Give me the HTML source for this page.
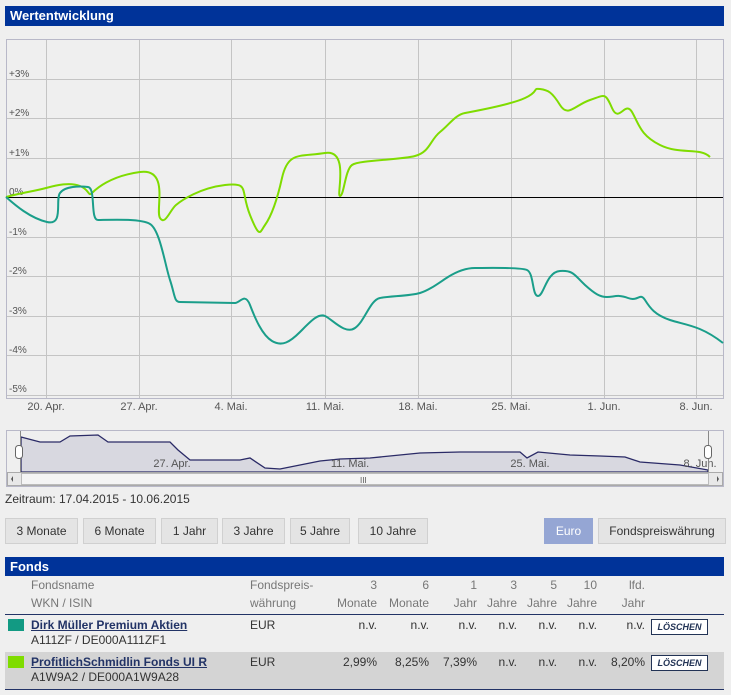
<!DOCTYPE html>
<html><head><meta charset="utf-8"><style>
body{margin:0;width:731px;height:695px;background:#efefef;font-family:"Liberation Sans",sans-serif;position:relative;overflow:hidden;color:#333}
.bar{position:absolute;left:5px;width:719px;background:#003399;color:#fff;font-weight:bold;font-size:13px}
.btn{position:absolute;top:518px;height:24px;border:1px solid #d0d0d0;background:#e4e4e4;font-size:12px;color:#333;line-height:24px;text-align:center}
.t{position:absolute;font-size:12px}
.r{text-align:right}
.g{color:#777}
.del{position:absolute;left:651px;width:55px;height:14px;border:1px solid #223355;background:#fff;font-size:9px;font-weight:bold;font-style:italic;color:#223355;text-align:center;line-height:14px}
</style></head><body>
<div class="bar" style="top:6px;height:20px;line-height:20px;padding-left:5px;width:714px">Wertentwicklung</div>
<svg style="position:absolute;left:0;top:0" width="731" height="695" font-family="Liberation Sans" font-size="10">
<rect x="6.5" y="39.5" width="717" height="359" fill="#efefef" stroke="#b8b8c8"/>
<g stroke="#c4c4c4">
<path d="M46.5 40V398M139.5 40V398M231.5 40V398M325.5 40V398M418.5 40V398M511.5 40V398M604.5 40V398M696.5 40V398"/>
<path d="M7 79.5H723M7 118.5H723M7 158.5H723M7 237.5H723M7 276.5H723M7 316.5H723M7 355.5H723M7 395.5H723"/>
</g>
<path d="M7 197.5H723" stroke="#000"/>
<g fill="#555"><text x="9" y="77">+3%</text><text x="9" y="116">+2%</text><text x="9" y="156">+1%</text><text x="9" y="195">0%</text><text x="9" y="235">-1%</text><text x="9" y="274">-2%</text><text x="9" y="314">-3%</text><text x="9" y="353">-4%</text><text x="9" y="392">-5%</text></g>
<g fill="#555" font-size="11" text-anchor="middle"><text x="46" y="410">20. Apr.</text><text x="139" y="410">27. Apr.</text><text x="231" y="410">4. Mai.</text><text x="325" y="410">11. Mai.</text><text x="418" y="410">18. Mai.</text><text x="511" y="410">25. Mai.</text><text x="604" y="410">1. Jun.</text><text x="696" y="410">8. Jun.</text></g>
<path fill="none" stroke="#7fdc00" stroke-width="2" d="M6 197 C20 193 35 191 46 188 S70 182 80 186 S88 197 92 193 S110 176 140 172 S155 210 160 218 S170 210 176 205 S200 188 225 185 S240 190 250 215 S260 232 265 225 S276 205 282 178 S300 157 325 153 S336 196 340 196 S345 170 352 165 S400 160 415 156 S430 140 440 132 S455 115 465 113 S510 105 525 98 S532 88 540 89 S552 92 560 105 S575 105 590 100 S605 92 612 108 S625 100 632 112 S640 135 660 145 S700 147 710 157"/>
<path fill="none" stroke="#1a9e8a" stroke-width="2" d="M6 197 C15 205 30 218 47 222 S55 200 60 193 S80 186 88 187 S90 220 98 220 S140 218 150 224 S165 265 170 280 S174 302 180 302 S230 303 235 303 S245 292 250 305 S262 335 272 341 S290 342 300 332 S318 313 325 316 S345 335 355 328 S370 300 380 298 S410 296 420 293 S440 282 448 277 S465 268 475 268 S520 267 527 270 S532 296 538 296 S546 272 560 271 S575 276 585 285 S600 297 607 297 S618 294 628 298 S640 292 645 300 S655 315 670 320 S700 325 723 343"/>
<!-- navigator -->
<rect x="6.5" y="430.5" width="717" height="56" fill="#efefef" stroke="#b8b8c8"/>
<path fill="#d8d8e0" stroke="#2a2a66" stroke-width="1.3" d="M21 437 L40 442 L60 442 L70 436 L98 435 L108 442 L170 442 L178 450 L190 460 L240 460 L250 458 L265 468 L280 469 L320 461 L340 459 L370 458 L420 453 L460 452 L520 452 L527 458 L538 452 L570 455 L600 456 L625 457 L640 462 L680 465 L708 470 L708 472 L21 472Z"/>
<g fill="#555" font-size="11" text-anchor="middle"><text x="172" y="467">27. Apr.</text><text x="350" y="467">11. Mai.</text><text x="530" y="467">25. Mai.</text><text x="700" y="467">8. Jun.</text></g>
<path d="M20.5 431V472M708.5 431V472" stroke="#888"/>
<rect x="15.5" y="445.5" width="7" height="13" rx="3" fill="#fff" stroke="#666"/>
<rect x="704.5" y="445.5" width="7" height="13" rx="3" fill="#fff" stroke="#666"/>
<rect x="7.5" y="472.5" width="715" height="13" fill="#e8e8e8" stroke="#aaa"/>
<rect x="21.5" y="473.5" width="687" height="11" fill="#f4f4f4" stroke="#bbb"/>
<text x="360" y="483" font-size="8" fill="#555">III</text>
<path d="M13 476L11 479L13 482Z M717 476L719 479L717 482Z" fill="#555"/>
</svg>
<div class="t" style="left:5px;top:492px">Zeitraum: 17.04.2015 - 10.06.2015</div>
<div class="btn" style="left:5px;width:71px">3 Monate</div>
<div class="btn" style="left:83px;width:71px">6 Monate</div>
<div class="btn" style="left:161px;width:55px">1 Jahr</div>
<div class="btn" style="left:222px;width:61px">3 Jahre</div>
<div class="btn" style="left:290px;width:58px">5 Jahre</div>
<div class="btn" style="left:358px;width:68px">10 Jahre</div>
<div class="btn" style="left:544px;width:47px;background:#95a6d4;color:#fff;border-color:#95a6d4">Euro</div>
<div class="btn" style="left:598px;width:126px">Fondspreiswährung</div>
<div class="bar" style="top:557px;height:19px;line-height:19px;padding-left:5px;width:714px">Fonds</div>
<div style="position:absolute;left:5px;top:614px;width:719px;height:1px;background:#223366"></div>
<div style="position:absolute;left:5px;top:652px;width:719px;height:37px;background:#d4d4d4;border-bottom:1px solid #223366"></div>
<div class="t g" style="left:31px;top:578px">Fondsname</div><div class="t g" style="left:31px;top:596px">WKN / ISIN</div>
<div class="t g" style="left:250px;top:578px">Fondspreis-</div><div class="t g" style="left:250px;top:596px">währung</div>
<div class="t g r" style="left:320px;width:57px;top:578px">3</div><div class="t g r" style="left:320px;width:57px;top:596px">Monate</div>
<div class="t g r" style="left:370px;width:59px;top:578px">6</div><div class="t g r" style="left:370px;width:59px;top:596px">Monate</div>
<div class="t g r" style="left:440px;width:37px;top:578px">1</div><div class="t g r" style="left:440px;width:37px;top:596px">Jahr</div>
<div class="t g r" style="left:480px;width:37px;top:578px">3</div><div class="t g r" style="left:480px;width:37px;top:596px">Jahre</div>
<div class="t g r" style="left:520px;width:37px;top:578px">5</div><div class="t g r" style="left:520px;width:37px;top:596px">Jahre</div>
<div class="t g r" style="left:560px;width:37px;top:578px">10</div><div class="t g r" style="left:560px;width:37px;top:596px">Jahre</div>
<div class="t g r" style="left:600px;width:45px;top:578px">lfd.</div><div class="t g r" style="left:600px;width:45px;top:596px">Jahr</div>
<div style="position:absolute;left:8px;top:619px;width:16px;height:12px;background:#129a83"></div>
<div class="t" style="left:31px;top:618px;font-weight:bold;color:#223366;text-decoration:underline">Dirk Müller Premium Aktien</div>
<div class="t" style="left:31px;top:633px">A111ZF / DE000A111ZF1</div>
<div class="t" style="left:250px;top:618px">EUR</div>
<div class="t r" style="left:320px;width:57px;top:618px">n.v.</div><div class="t r" style="left:370px;width:59px;top:618px">n.v.</div><div class="t r" style="left:440px;width:37px;top:618px">n.v.</div><div class="t r" style="left:480px;width:37px;top:618px">n.v.</div><div class="t r" style="left:520px;width:37px;top:618px">n.v.</div><div class="t r" style="left:560px;width:37px;top:618px">n.v.</div><div class="t r" style="left:600px;width:45px;top:618px">n.v.</div>
<div class="del" style="top:619px">LÖSCHEN</div>
<div style="position:absolute;left:8px;top:656px;width:16px;height:12px;background:#7fdc00"></div>
<div class="t" style="left:31px;top:655px;font-weight:bold;color:#223366;text-decoration:underline">ProfitlichSchmidlin Fonds UI R</div>
<div class="t" style="left:31px;top:670px">A1W9A2 / DE000A1W9A28</div>
<div class="t" style="left:250px;top:655px">EUR</div>
<div class="t r" style="left:320px;width:57px;top:655px">2,99%</div><div class="t r" style="left:370px;width:59px;top:655px">8,25%</div><div class="t r" style="left:430px;width:47px;top:655px">7,39%</div><div class="t r" style="left:480px;width:37px;top:655px">n.v.</div><div class="t r" style="left:520px;width:37px;top:655px">n.v.</div><div class="t r" style="left:560px;width:37px;top:655px">n.v.</div><div class="t r" style="left:600px;width:45px;top:655px">8,20%</div>
<div class="del" style="top:655px">LÖSCHEN</div>
</body></html>
